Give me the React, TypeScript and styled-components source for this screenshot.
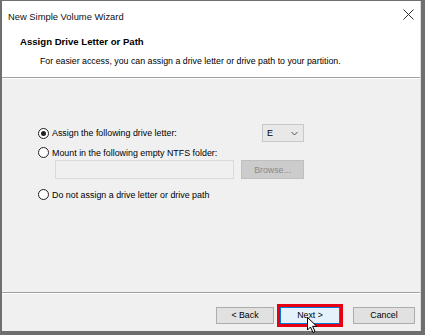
import React from "react";
import styled, { createGlobalStyle } from "styled-components";

const GlobalStyle = createGlobalStyle`
  html, body {
    margin: 0;
    padding: 0;
    background: #6f6f6f;
  }
  body {
    font-family: "Liberation Sans", Arial, sans-serif;
    color: #000;
  }
`;

const Frame = styled.div`
  width: 425px;
  height: 335px;
  box-sizing: border-box;
  padding: 1px 4px 4px 2px;
  background: #6f6f6f;
`;

const Dialog = styled.div`
  height: 100%;
  display: flex;
  flex-direction: column;
  background: #f0f0f0;
  border-right: 1px solid #dcdcdc;
`;

const Top = styled.div`
  background: #fff;
  height: 76px;
  flex-shrink: 0;
  display: flex;
  flex-direction: column;
  border-bottom: 1px solid #a0a0a0;
  box-shadow: 0 1px 0 #fff;
`;

const TitleBar = styled.div`
  height: 28px;
  display: flex;
  align-items: center;
  justify-content: space-between;
  padding: 0 0 0 6px;
`;

const Title = styled.span`
  font-size: 9.4px;
  color: #111;
  margin-top: 2px;
`;

const Close = styled.div`
  width: 24px;
  height: 24px;
  display: flex;
  align-items: center;
  justify-content: center;
  margin-top: -2px;
`;

const Header = styled.div`
  padding: 7px 0 0 18px;
`;

const Heading = styled.div`
  font-size: 9.6px;
  font-weight: 700;
`;

const SubHeading = styled.div`
  font-size: 8.8px;
  margin: 9px 0 0 20px;
`;

const Body = styled.div`
  flex: 1;
  padding: 46px 0 0 36px;
  border-bottom: 1px solid #a0a0a0;
  box-shadow: 0 1px 0 #fff;
`;

const Options = styled.div`
  width: 266px;
  display: flex;
  flex-direction: column;
`;

const Row = styled.div<{ $gap?: number }>`
  display: flex;
  align-items: center;
  justify-content: space-between;
  margin-top: ${(p) => p.$gap ?? 0}px;
`;

const RadioLabel = styled.label`
  display: flex;
  align-items: center;
  gap: 3px;
  font-size: 8.9px;
`;

const RadioCircle = styled.span<{ $checked?: boolean }>`
  width: 11px;
  height: 11px;
  box-sizing: border-box;
  border: 1px solid #222;
  border-radius: 50%;
  background: #fff;
  display: flex;
  align-items: center;
  justify-content: center;
  &::after {
    content: "";
    width: 5px;
    height: 5px;
    border-radius: 50%;
    background: ${(p) => (p.$checked ? "#222" : "transparent")};
  }
`;

const Select = styled.div`
  width: 42px;
  height: 18px;
  box-sizing: border-box;
  border: 1px solid #c8c8c8;
  background: #e8e8e8;
  display: flex;
  align-items: center;
  justify-content: space-between;
  padding: 0 5px 0 4px;
  font-size: 9px;
`;

const FolderRow = styled.div`
  display: flex;
  justify-content: space-between;
  margin: 2px 0 0 17px;
`;

const FolderInput = styled.div`
  width: 179px;
  height: 19px;
  box-sizing: border-box;
  border: 1px solid #dadada;
  background: #f0f0f0;
`;

const Button = styled.div<{ $disabled?: boolean; $primary?: boolean; $w?: number }>`
  width: ${(p) => p.$w ?? 62}px;
  height: ${(p) => (p.$disabled ? 19 : 17)}px;
  box-sizing: border-box;
  border: 1px solid ${(p) => (p.$disabled ? "#bfbfbf" : p.$primary ? "#0078d7" : "#adadad")};
  background: ${(p) => (p.$disabled ? "#cccccc" : p.$primary ? "#e5f1fb" : "#e1e1e1")};
  color: ${(p) => (p.$disabled ? "#8a8a8a" : "#000")};
  font-size: 8.8px;
  display: flex;
  align-items: center;
  justify-content: center;
`;

const Footer = styled.div`
  height: 38px;
  flex-shrink: 0;
  box-sizing: border-box;
  display: flex;
  align-items: center;
  justify-content: flex-end;
  padding: 6px 5px 0 0;
`;

const Highlight = styled.div`
  position: relative;
  border: 3px solid #e60012;
  margin: 0 10px 0 3px;
`;

const Cursor = styled.svg`
  position: absolute;
  left: 27px;
  top: 10px;
`;

const Chevron = () => (
  <svg width="7" height="5" viewBox="0 0 7 5">
    <path d="M0.5 1 L3.5 4 L6.5 1" fill="none" stroke="#555" strokeWidth="1" />
  </svg>
);

export default function App() {
  return (
    <Frame>
      <GlobalStyle />
      <Dialog>
        <Top>
          <TitleBar>
            <Title>New Simple Volume Wizard</Title>
            <Close>
              <svg width="11" height="11" viewBox="0 0 11 11">
                <path d="M0.5 0.5 L10.5 10.5 M10.5 0.5 L0.5 10.5" stroke="#333" strokeWidth="1" />
              </svg>
            </Close>
          </TitleBar>
          <Header>
            <Heading>Assign Drive Letter or Path</Heading>
            <SubHeading>
              For easier access, you can assign a drive letter or drive path to your partition.
            </SubHeading>
          </Header>
        </Top>
        <Body>
          <Options>
            <Row>
              <RadioLabel>
                <RadioCircle $checked />
                Assign the following drive letter:
              </RadioLabel>
              <Select>
                E
                <Chevron />
              </Select>
            </Row>
            <Row $gap={5}>
              <RadioLabel>
                <RadioCircle />
                Mount in the following empty NTFS folder:
              </RadioLabel>
            </Row>
            <FolderRow>
              <FolderInput />
              <Button $disabled $w={63}>Browse...</Button>
            </FolderRow>
            <Row $gap={10}>
              <RadioLabel>
                <RadioCircle />
                Do not assign a drive letter or drive path
              </RadioLabel>
            </Row>
          </Options>
        </Body>
        <Footer>
          <Button $w={58}>&lt; Back</Button>
          <Highlight>
            <Button $primary $w={60}>Next &gt;</Button>
            <Cursor width="11" height="17" viewBox="0 0 11 17">
              <path
                d="M0.5 0.5 L0.5 13 L3.5 10 L6 15.5 L8 14.5 L5.6 9.3 L9.8 9.3 Z"
                fill="#fff"
                stroke="#000"
                strokeWidth="1"
              />
            </Cursor>
          </Highlight>
          <Button>Cancel</Button>
        </Footer>
      </Dialog>
    </Frame>
  );
}
